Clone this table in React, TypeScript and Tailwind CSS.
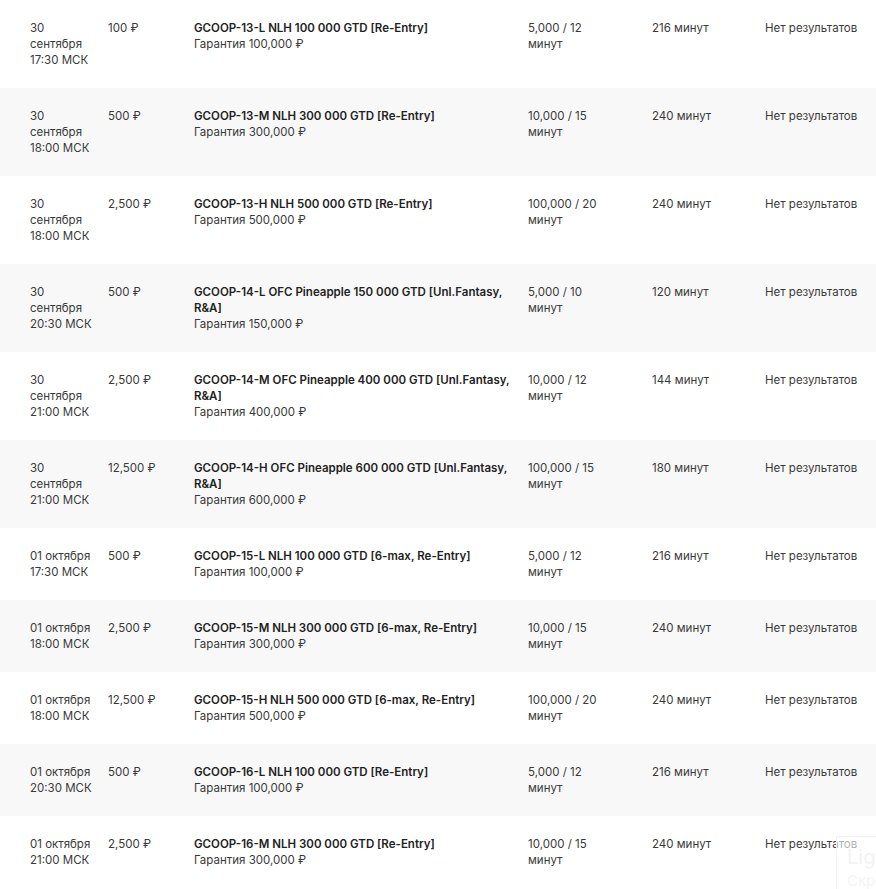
import React from 'react';

type Row = {
  date: string[];
  buyIn: string;
  name: string;
  guarantee: string;
  structure: string;
  duration: string;
};

const rows: Row[] = [
  { date: ['30', 'сентября', '17:30 МСК'], buyIn: '100 ₽', name: 'GCOOP-13-L NLH 100 000 GTD [Re-Entry]', guarantee: 'Гарантия 100,000 ₽', structure: '5,000 / 12 минут', duration: '216 минут' },
  { date: ['30', 'сентября', '18:00 МСК'], buyIn: '500 ₽', name: 'GCOOP-13-M NLH 300 000 GTD [Re-Entry]', guarantee: 'Гарантия 300,000 ₽', structure: '10,000 / 15 минут', duration: '240 минут' },
  { date: ['30', 'сентября', '18:00 МСК'], buyIn: '2,500 ₽', name: 'GCOOP-13-H NLH 500 000 GTD [Re-Entry]', guarantee: 'Гарантия 500,000 ₽', structure: '100,000 / 20 минут', duration: '240 минут' },
  { date: ['30', 'сентября', '20:30 МСК'], buyIn: '500 ₽', name: 'GCOOP-14-L OFC Pineapple 150 000 GTD [Unl.Fantasy, R&A]', guarantee: 'Гарантия 150,000 ₽', structure: '5,000 / 10 минут', duration: '120 минут' },
  { date: ['30', 'сентября', '21:00 МСК'], buyIn: '2,500 ₽', name: 'GCOOP-14-M OFC Pineapple 400 000 GTD [Unl.Fantasy, R&A]', guarantee: 'Гарантия 400,000 ₽', structure: '10,000 / 12 минут', duration: '144 минут' },
  { date: ['30', 'сентября', '21:00 МСК'], buyIn: '12,500 ₽', name: 'GCOOP-14-H OFC Pineapple 600 000 GTD [Unl.Fantasy, R&A]', guarantee: 'Гарантия 600,000 ₽', structure: '100,000 / 15 минут', duration: '180 минут' },
  { date: ['01 октября', '17:30 МСК'], buyIn: '500 ₽', name: 'GCOOP-15-L NLH 100 000 GTD [6-max, Re-Entry]', guarantee: 'Гарантия 100,000 ₽', structure: '5,000 / 12 минут', duration: '216 минут' },
  { date: ['01 октября', '18:00 МСК'], buyIn: '2,500 ₽', name: 'GCOOP-15-M NLH 300 000 GTD [6-max, Re-Entry]', guarantee: 'Гарантия 300,000 ₽', structure: '10,000 / 15 минут', duration: '240 минут' },
  { date: ['01 октября', '18:00 МСК'], buyIn: '12,500 ₽', name: 'GCOOP-15-H NLH 500 000 GTD [6-max, Re-Entry]', guarantee: 'Гарантия 500,000 ₽', structure: '100,000 / 20 минут', duration: '240 минут' },
  { date: ['01 октября', '20:30 МСК'], buyIn: '500 ₽', name: 'GCOOP-16-L NLH 100 000 GTD [Re-Entry]', guarantee: 'Гарантия 100,000 ₽', structure: '5,000 / 12 минут', duration: '216 минут' },
  { date: ['01 октября', '21:00 МСК'], buyIn: '2,500 ₽', name: 'GCOOP-16-M NLH 300 000 GTD [Re-Entry]', guarantee: 'Гарантия 300,000 ₽', structure: '10,000 / 15 минут', duration: '240 минут' },
];

function ScheduleRow({ row, striped }: { row: Row; striped: boolean }) {
  return (
    <div
      className={`grid grid-cols-[78px_86px_334px_124px_113px_1fr] pl-[30px] py-5 ${
        striped ? 'bg-[#f8f8f8]' : 'bg-white'
      }`}
    >
      {/* date + time */}
      <div>
        {row.date.map((line, i) => (
          <div key={i}>{line}</div>
        ))}
      </div>
      <div>{row.buyIn}</div>
      <div className="pr-[14px]">
        <div className="font-semibold text-[#222]">{row.name}</div>
        <div>{row.guarantee}</div>
      </div>
      <div className="pr-[40px]">{row.structure}</div>
      <div>{row.duration}</div>
      <div className="whitespace-nowrap">Нет результатов</div>
    </div>
  );
}

export default function App() {
  return (
    <div className="relative w-[876px] h-[889px] overflow-hidden bg-white font-['Inter',sans-serif] text-[11.5px] leading-4 text-[#3a3a3a]">
      {rows.map((row, i) => (
        <ScheduleRow key={i} row={row} striped={i % 2 === 1} />
      ))}

      {/* faint floating widget peeking in the corner */}
      <div className="absolute left-[836px] top-[836px] w-[80px] h-[80px] border border-[#f2f2f2] bg-white/60 pl-[10px] pt-[10px] leading-none">
        <div className="text-[20px] text-[#f3f3f3]">Lightshot</div>
        <div className="mt-[6px] text-[15px] text-[#f5f5f5]">Скриншот</div>
        <div className="mt-[4px] text-[12px] text-[#f6f6f6]">Выберите</div>
      </div>
    </div>
  );
}
